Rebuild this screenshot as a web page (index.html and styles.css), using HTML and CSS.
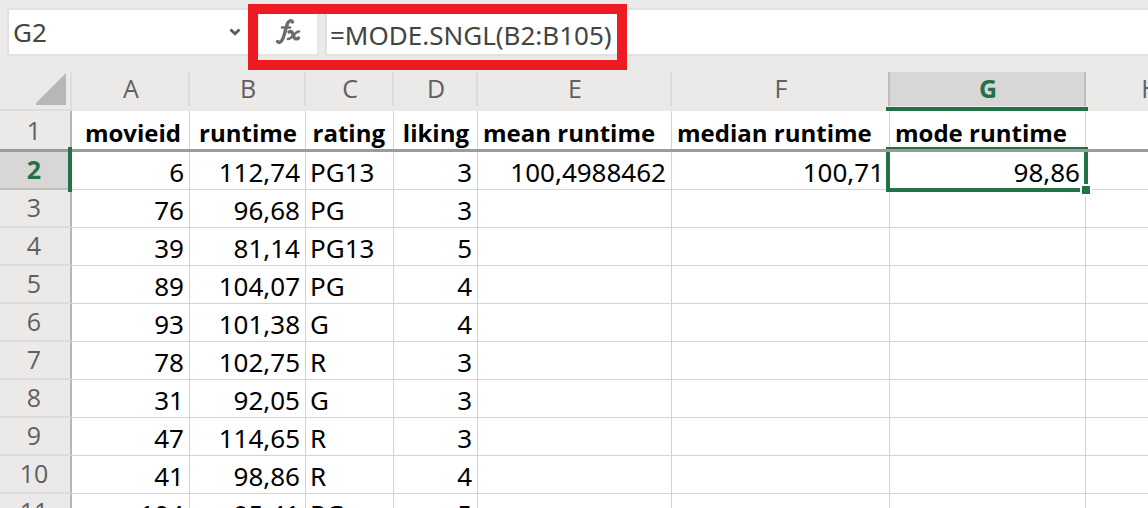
FILE: index.html
```html
<!DOCTYPE html>
<html lang="en">
<head>
<meta charset="utf-8">
<title>Movie runtimes</title>
<link rel="stylesheet" href="styles.css">
</head>
<body>
<div class="app">
  <form class="formula-bar">
    <div class="name-box">
      <input class="name-input" type="text" value="G2" aria-label="Name box">
      <button class="name-toggle" type="button" aria-label="Show names">
        <svg width="12" height="8" viewBox="0 0 12 8"><path d="M1.500 1.500 6 5.800l4.500-4.300" fill="none" stroke="#5c5c5c" stroke-width="2.800"/></svg>
      </button>
    </div>
    <button class="fx-button" type="button" aria-label="Insert function">
      <svg width="26" height="28" viewBox="0 0 26 28" fill="none" stroke="#6b6c70" stroke-linecap="round">
        <path d="M17.500 4C16.500 1.800 13.800 2.500 12.500 5.500C11 9 10 15 8.300 19.500C6.800 24 4.500 25.500 2.500 23.500" stroke-width="3.400"/>
        <path d="M7 9.500H15" stroke-width="2.400"/>
        <path d="M14 14C16.500 12.500 17.500 14.500 18.200 17C19 20.500 20.500 22 23.500 20" stroke-width="3.400"/>
        <path d="M24 13.500C20.500 13 17 21 13 21" stroke-width="2.600"/>
      </svg>
    </button>
    <input class="formula-input" type="text" value="=MODE.SNGL(B2:B105)" aria-label="Formula">
    <span class="highlight"></span>
  </form>
  <div class="sheet">
    <table class="grid">
      <colgroup><col class="c-row"><col class="c-a"><col class="c-b"><col class="c-c"><col class="c-d"><col class="c-e"><col class="c-f"><col class="c-g"><col class="c-h"></colgroup>
      <thead>
        <tr>
          <th class="corner"><svg width="30" height="32" viewBox="0 0 30 32"><path d="M30 0V32H0V30Z" fill="#b7b7b7"/></svg></th>
          <th>A</th><th>B</th><th>C</th><th>D</th><th>E</th><th class="before">F</th><th class="active">G</th><th>H</th>
        </tr>
      </thead>
      <tbody>
        <tr class="titles"><th>1</th><td class="num">movieid</td><td class="num">runtime</td><td class="num">rating</td><td class="num">liking</td><td>mean runtime</td><td>median runtime</td><td>mode runtime</td><td></td></tr>
        <tr><th class="active">2</th><td class="num">6</td><td class="num">112,74</td><td>PG13</td><td class="num">3</td><td class="num">100,4988462</td><td class="num">100,71</td><td class="num selected">98,86<span class="selection"><span class="handle"></span></span></td><td></td></tr>
        <tr><th>3</th><td class="num">76</td><td class="num">96,68</td><td>PG</td><td class="num">3</td><td></td><td></td><td></td><td></td></tr>
        <tr><th>4</th><td class="num">39</td><td class="num">81,14</td><td>PG13</td><td class="num">5</td><td></td><td></td><td></td><td></td></tr>
        <tr><th>5</th><td class="num">89</td><td class="num">104,07</td><td>PG</td><td class="num">4</td><td></td><td></td><td></td><td></td></tr>
        <tr><th>6</th><td class="num">93</td><td class="num">101,38</td><td>G</td><td class="num">4</td><td></td><td></td><td></td><td></td></tr>
        <tr><th>7</th><td class="num">78</td><td class="num">102,75</td><td>R</td><td class="num">3</td><td></td><td></td><td></td><td></td></tr>
        <tr><th>8</th><td class="num">31</td><td class="num">92,05</td><td>G</td><td class="num">3</td><td></td><td></td><td></td><td></td></tr>
        <tr><th>9</th><td class="num">47</td><td class="num">114,65</td><td>R</td><td class="num">3</td><td></td><td></td><td></td><td></td></tr>
        <tr><th>10</th><td class="num">41</td><td class="num">98,86</td><td>R</td><td class="num">4</td><td></td><td></td><td></td><td></td></tr>
        <tr><th>11</th><td class="num">104</td><td class="num">95,41</td><td>PG</td><td class="num">5</td><td></td><td></td><td></td><td></td></tr>
      </tbody>
    </table>
  </div>
</div>
</body>
</html>
```
FILE: styles.css
```css
* { box-sizing: border-box; }

body {
  margin: 0;
  background: #ebeae9;
  font-family: "Noto Sans", "Open Sans", sans-serif;
  font-size: 26px;
  color: #000;
}

.app {
  display: flex;
  flex-direction: column;
  height: 100vh;
  overflow: hidden;
}

.formula-bar {
  position: relative;
  display: flex;
  flex: none;
  gap: 6px;
  padding: 8px 0 16px 7px;
}

input, button {
  margin: 0;
  border: 0;
  background: #fff;
  font: inherit;
  color: #444;
}

.name-box {
  display: flex;
  width: 244px;
  height: 48px;
  border: 2px solid #e1e1e1;
  background: #fff;
}

.name-input {
  flex: 1;
  min-width: 0;
  padding: 0 4px;
}

.name-toggle {
  width: 24px;
  padding: 0 4px 0 0;
  display: flex;
  align-items: center;
  justify-content: center;
}

.fx-button {
  width: 62px;
  height: 48px;
  padding: 0;
  border: 2px solid #e4e4e4;
  display: flex;
  align-items: center;
  justify-content: center;
}

.formula-input {
  flex: 1;
  min-width: 0;
  height: 48px;
  padding: 6px 3px 0;
  border: 2px solid #e1e1e1;
  border-right: 0;
}

.highlight {
  position: absolute;
  left: 248px;
  top: 4px;
  width: 379px;
  height: 66px;
  border: 10px solid #ed1c24;
  pointer-events: none;
}

.sheet {
  flex: 1;
  min-height: 0;
  overflow: hidden;
}

.grid {
  width: 1215px;
  table-layout: fixed;
  border-collapse: separate;
  border-spacing: 0;
}

.c-row { width: 72px; }
.c-a { width: 118px; }
.c-b { width: 116px; }
.c-c { width: 88px; }
.c-d { width: 84px; }
.c-e { width: 194px; }
.c-f { width: 218px; }
.c-g { width: 196px; }
.c-h { width: 129px; }

th {
  padding: 0;
  font-family: "Open Sans", "Noto Sans", sans-serif;
  font-size: 25px;
  font-weight: 400;
  color: #606060;
}

thead th {
  height: 39px;
  padding-bottom: 6px;
  line-height: 33px;
  background: linear-gradient(#dcdcdc, #dcdcdc) right top / 2px 34px no-repeat;
}

thead .corner {
  padding: 0 4px 3px 0;
  border-right: 2px solid #dcdcdc;
  border-bottom: 2px solid #dcdcdc;
  background: none;
  text-align: right;
  line-height: 0;
}

thead .before { background-image: linear-gradient(#bdbdbd, #bdbdbd); }

thead .active {
  position: relative;
  background:
    linear-gradient(#bdbdbd, #bdbdbd) right top / 2px 34px no-repeat,
    linear-gradient(#d8d7d6, #d8d7d6) left top / 100% 34px no-repeat;
}

thead .active::after {
  content: "";
  position: absolute;
  left: -4px;
  right: -2px;
  bottom: 0;
  height: 4px;
  background: #217346;
}

.active {
  color: #217346;
  font-weight: 700;
}

tbody th {
  height: 38px;
  padding: 0 2px 2px 0;
  border-right: 2px solid #b5b5b5;
  border-bottom: 2px solid #dcdcdc;
  line-height: 34px;
}

tbody .active {
  position: relative;
  background: #d8d7d6;
  border-bottom-color: #bfbfbf;
}

tbody .active::after {
  content: "";
  position: absolute;
  top: -5px;
  right: -2px;
  bottom: -4px;
  width: 4px;
  background: #217346;
}

td {
  height: 38px;
  padding: 3px 5px 0 4px;
  border-right: 1px solid #d4d4d4;
  border-bottom: 1px solid #d4d4d4;
  background: #fff;
  line-height: 34px;
  white-space: nowrap;
}

.num { text-align: right; }

.titles th, .titles td {
  position: relative;
  height: 41px;
  border-bottom: 0;
}

.titles th { padding-bottom: 4px; }

.titles td {
  padding-left: 5px;
  font-family: "Open Sans", "Noto Sans", sans-serif;
  font-size: 24px;
  font-weight: 700;
}

.titles th::after, .titles td::after {
  content: "";
  position: absolute;
  left: 0;
  right: -2px;
  bottom: 0;
  height: 3px;
  background: #9b9b9b;
}

.titles .num { padding-right: 8px; }

.selected { position: relative; }

.selection {
  position: absolute;
  top: 0;
  left: -4px;
  right: -3px;
  bottom: -3px;
  border: 4px solid #217346;
  border-top: 0;
}

.selection::before {
  content: "";
  position: absolute;
  top: -5px;
  left: -4px;
  right: -4px;
  height: 2px;
  background: #217346;
}

.handle {
  position: absolute;
  right: -8px;
  bottom: -8px;
  width: 12px;
  height: 12px;
  border: 2px solid #fff;
  background: #217346;
}
```
